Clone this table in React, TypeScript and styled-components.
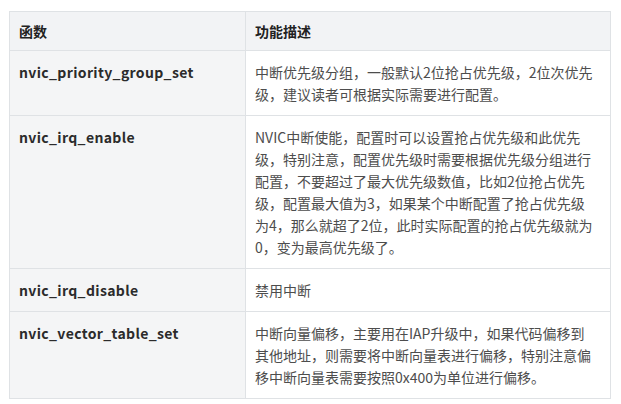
import React from "react";
import styled, { createGlobalStyle } from "styled-components";

const Global = createGlobalStyle`
  html, body { margin: 0; padding: 0; background: #ffffff; }
  body { font-family: "Noto Sans CJK SC", "Noto Sans", sans-serif; }
`;

const Page = styled.div`
  padding: 11px 0 0 9px;
`;

const Table = styled.table`
  border-collapse: collapse;
  table-layout: fixed;
  width: 602px;
  font-size: 14px;
  line-height: 22px;
`;

const HeadCell = styled.th`
  background: #f2f3f5;
  border: 1px solid #dfe2e5;
  color: #222;
  font-weight: 700;
  text-align: left;
  height: 39px;
  padding: 0 9px;
  box-sizing: border-box;
  vertical-align: middle;
`;

const NameCell = styled.td`
  background: #f4f5f6;
  border: 1px solid #dfe2e5;
  color: #2b2b2b;
  font-weight: 700;
  letter-spacing: 0.35px;
  padding: 10px 9px;
  vertical-align: top;
`;

const DescCell = styled.td`
  background: #ffffff;
  border: 1px solid #dfe2e5;
  color: #4d4d4d;
  padding: 10px 12px 10px 9px;
  vertical-align: top;
`;

const rows: [string, string][] = [
  [
    "nvic_priority_group_set",
    "中断优先级分组，一般默认2位抢占优先级，2位次优先级，建议读者可根据实际需要进行配置。",
  ],
  [
    "nvic_irq_enable",
    "NVIC中断使能，配置时可以设置抢占优先级和此优先级，特别注意，配置优先级时需要根据优先级分组进行配置，不要超过了最大优先级数值，比如2位抢占优先级，配置最大值为3，如果某个中断配置了抢占优先级为4，那么就超了2位，此时实际配置的抢占优先级就为0，变为最高优先级了。",
  ],
  ["nvic_irq_disable", "禁用中断"],
  [
    "nvic_vector_table_set",
    "中断向量偏移，主要用在IAP升级中，如果代码偏移到其他地址，则需要将中断向量表进行偏移，特别注意偏移中断向量表需要按照0x400为单位进行偏移。",
  ],
];

export default function App() {
  return (
    <>
      <Global />
      <Page>
        <Table>
          <colgroup>
            <col style={{ width: 236 }} />
            <col />
          </colgroup>
          <thead>
            <tr>
              <HeadCell>函数</HeadCell>
              <HeadCell>功能描述</HeadCell>
            </tr>
          </thead>
          <tbody>
            {rows.map(([name, desc]) => (
              <tr key={name}>
                <NameCell>{name}</NameCell>
                <DescCell>{desc}</DescCell>
              </tr>
            ))}
          </tbody>
        </Table>
      </Page>
    </>
  );
}
